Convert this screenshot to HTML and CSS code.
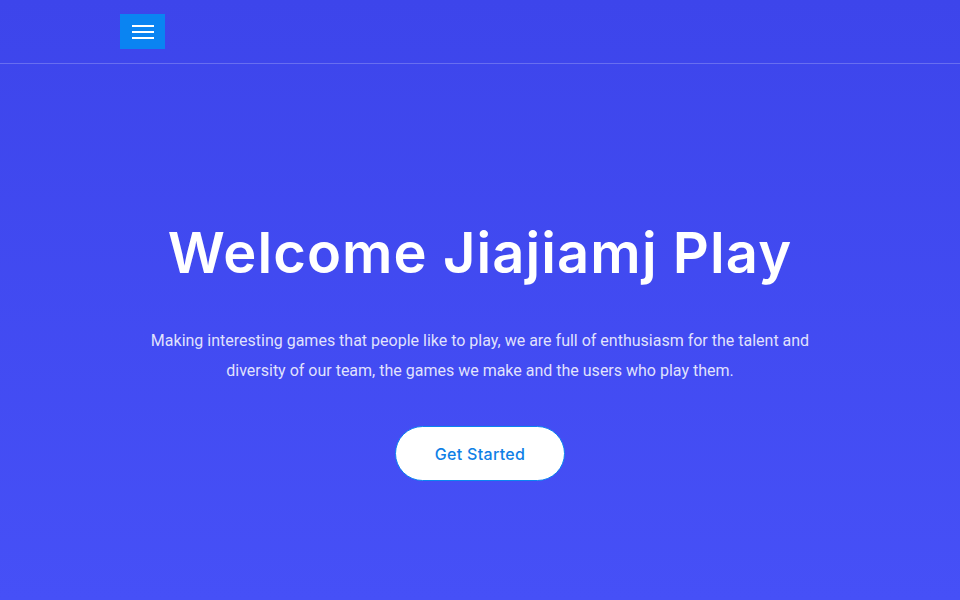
FILE: index.html
```html
<!DOCTYPE html>
<html lang="en">
<head>
<meta charset="utf-8">
<title>Jiajiamj Play</title>
<link rel="stylesheet" href="styles.css">
</head>
<body>
<div class="page">
  <header class="header">
    <div class="container">
      <button class="menu-btn" aria-label="Menu">
        <span class="bar"></span><span class="bar"></span><span class="bar"></span>
      </button>
    </div>
  </header>
  <section class="hero">
    <h1 class="title">Welcome Jiajiamj Play</h1>
    <p class="lead">Making interesting games that people like to play, we are full of enthusiasm for the talent and diversity of our team, the games we make and the users who play them.</p>
    <a class="cta" href="#">Get Started</a>
  </section>
</div>
</body>
</html>
```
FILE: styles.css
```css
html, body {
  margin: 0;
  padding: 0;
}
body {
  font-family: Roboto, "Liberation Sans", sans-serif;
  background: linear-gradient(180deg, #3d45eb 0%, #4650f7 100%);
  min-height: 600px;
}
.page {
  min-height: 600px;
  display: flex;
  flex-direction: column;
}
.header {
  height: 64px;
  border-bottom: 1px solid rgba(255, 255, 255, 0.22);
  box-sizing: border-box;
  display: flex;
  align-items: center;
}
.container {
  width: 720px;
  margin: 0 auto;
  display: flex;
}
.menu-btn {
  width: 45px;
  height: 35px;
  background: #0a84f2;
  border: none;
  padding: 0;
  display: flex;
  flex-direction: column;
  align-items: center;
  justify-content: center;
  gap: 4px;
  cursor: pointer;
}
.bar {
  display: block;
  width: 22px;
  height: 2px;
  background: #ffffff;
}
.hero {
  display: flex;
  flex-direction: column;
  align-items: center;
  text-align: center;
  padding-top: 156px;
}
.title {
  margin: 0;
  font-family: Inter, "Open Sans", sans-serif;
  font-weight: 600;
  font-size: 56px;
  line-height: 66px;
  color: #ffffff;
  letter-spacing: 1.1px;
}
.lead {
  margin: 40px 0 0;
  width: 680px;
  font-size: 16px;
  line-height: 30px;
  color: rgba(255, 255, 255, 0.85);
}
.cta {
  margin-top: 40px;
  width: 170px;
  height: 55px;
  box-sizing: border-box;
  border-radius: 28px;
  background: #ffffff;
  border: 1px solid #0a84f2;
  color: #0f7fe6;
  font-family: Inter, "Open Sans", sans-serif;
  font-weight: 500;
  font-size: 16px;
  text-decoration: none;
  display: flex;
  align-items: center;
  justify-content: center;
  letter-spacing: 0.3px;
}
```
